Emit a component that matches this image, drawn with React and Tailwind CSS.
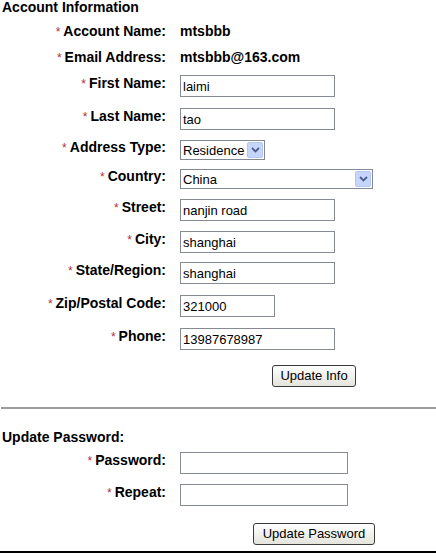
function Star() {
  return <span className="text-[12px] font-normal text-[#b0303a] mr-[3px]">*</span>;
}

function Row({ label, className = '', field = true, children }) {
  return (
    <div className={`flex items-center ${className}`}>
      <div
        className={`w-[166px] shrink-0 text-right text-[14px] leading-[16px] font-bold whitespace-nowrap ${
          field ? 'relative -top-[3px]' : ''
        }`}
      >
        <Star />
        {label}
      </div>
      <div className="ml-[14px] flex items-center">{children}</div>
    </div>
  );
}

function TextBox({ value = '', width = 'w-[155px]' }) {
  return (
    <input
      readOnly
      value={value}
      className={`${width} h-[22px] border border-[#858b91] bg-white px-[2px] text-[13px] text-black outline-none`}
    />
  );
}

function Select({ value, width }) {
  return (
    <div className={`${width} h-[20px] border border-[#7f8a94] bg-white flex items-center justify-between`}>
      <span className="pl-[2px] text-[13px] leading-none">{value}</span>
      <div className="w-[16px] h-[16px] mr-[1px] rounded-[2px] bg-[#c6d5fb] border border-[#b4c6f3] flex items-center justify-center">
        <svg width="9" height="6" viewBox="0 0 9 6">
          <path d="M1 1 L4.5 4.5 L8 1" fill="none" stroke="#4a5f8f" strokeWidth="1.8" />
        </svg>
      </div>
    </div>
  );
}

function Button({ children, width }) {
  return (
    <button
      className={`${width} h-[22px] rounded-[3px] border border-[#3a3a3a] bg-gradient-to-b from-white to-[#e4e3dc] text-[13px] text-black leading-none`}
    >
      {children}
    </button>
  );
}

export default function App() {
  return (
    <div className="w-[436px] h-[559px] bg-white overflow-hidden text-black font-['Liberation_Sans',Arial,sans-serif]">
      <h2 className="pl-[2px] text-[14px] font-bold leading-[14px] h-[14px]">Account Information</h2>

      <Row label="Account Name:" field={false} className="mt-[6px] h-[22px]">
        <span className="text-[14px] leading-[16px] font-bold">mtsbbb</span>
      </Row>
      <Row label="Email Address:" field={false} className="mt-[4px] h-[22px]">
        <span className="text-[14px] leading-[16px] font-bold">mtsbbb@163.com</span>
      </Row>

      <Row label="First Name:" className="mt-[7px] h-[22px]">
        <TextBox value="laimi" />
      </Row>
      <Row label="Last Name:" className="mt-[11px] h-[22px]">
        <TextBox value="tao" />
      </Row>
      <Row label="Address Type:" className="mt-[10px] h-[20px]">
        <Select value="Residence" width="w-[85px]" />
      </Row>
      <Row label="Country:" className="mt-[9px] h-[20px]">
        <Select value="China" width="w-[193px]" />
      </Row>
      <Row label="Street:" className="mt-[10px] h-[22px]">
        <TextBox value="nanjin road" />
      </Row>
      <Row label="City:" className="mt-[10px] h-[22px]">
        <TextBox value="shanghai" />
      </Row>
      <Row label="State/Region:" className="mt-[9px] h-[22px]">
        <TextBox value="shanghai" />
      </Row>
      <Row label="Zip/Postal Code:" className="mt-[11px] h-[22px]">
        <TextBox value="321000" width="w-[95px]" />
      </Row>
      <Row label="Phone:" className="mt-[11px] h-[22px]">
        <TextBox value="13987678987" />
      </Row>

      <div className="mt-[13px] pl-[272px] h-[22px]">
        <Button width="w-[84px]">Update Info</Button>
      </div>

      <div className="mt-[22px] ml-[1px] h-[2px] bg-[#9c9c9c]" />

      <h2 className="mt-[21px] pl-[2px] text-[14px] font-bold leading-[14px] h-[14px]">Update Password:</h2>

      <Row label="Password:" className="mt-[8px] h-[22px]">
        <TextBox width="w-[168px]" />
      </Row>
      <Row label="Repeat:" className="mt-[10px] h-[22px]">
        <TextBox width="w-[168px]" />
      </Row>

      <div className="mt-[15px] pl-[253px] h-[22px]">
        <Button width="w-[122px]">Update Password</Button>
      </div>

      <div className="mt-[8px] h-[2px] bg-black" />
    </div>
  );
}
